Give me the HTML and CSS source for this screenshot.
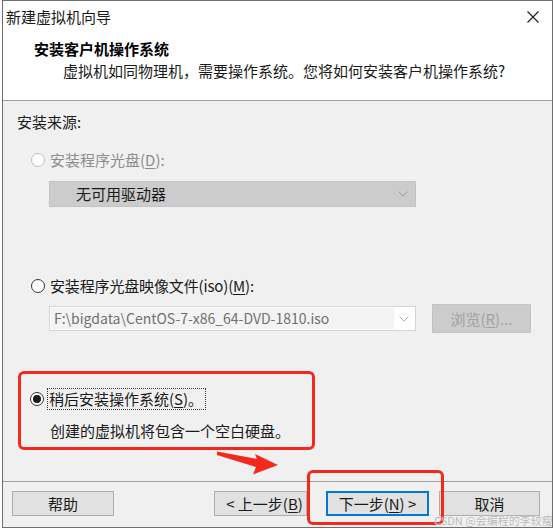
FILE: index.html
```html
<!DOCTYPE html>
<html lang="zh">
<head>
<meta charset="utf-8">
<title>新建虚拟机向导</title>
<link rel="stylesheet" href="styles.css">
</head>
<body>
<div class="window">
  <div class="top">
    <div class="titlebar">
      <span class="title">新建虚拟机向导</span>
      <svg class="close" width="12" height="12" viewBox="0 0 12 12"><path d="M0.5 0.5 L11.5 11.5 M11.5 0.5 L0.5 11.5" stroke="#1a1a1a" stroke-width="1.1" fill="none"/></svg>
    </div>
    <div class="header">
      <div class="h-title">安装客户机操作系统</div>
      <div class="h-sub">虚拟机如同物理机，需要操作系统。您将如何安装客户机操作系统?</div>
    </div>
  </div>

  <div class="content">
    <div class="section-label">安装来源:</div>

    <div class="radio-row disabled row1">
      <span class="radio"></span>
      <span class="label">安装程序光盘(<u>D</u>):</span>
    </div>
    <div class="select disabled-select">
      <span class="select-text">无可用驱动器</span>
      <svg class="chev" width="10" height="6" viewBox="0 0 10 6"><path d="M0.5 0.5 L5 5 L9.5 0.5" stroke="#9a9a9a" fill="none"/></svg>
    </div>

    <div class="radio-row row2">
      <span class="radio"></span>
      <span class="label">安装程序光盘映像文件(iso)(<u>M</u>):</span>
    </div>
    <div class="combo-row">
      <div class="combo">
        <span class="combo-text">F:\bigdata\CentOS-7-x86_64-DVD-1810.iso</span>
        <svg class="chev" width="10" height="6" viewBox="0 0 10 6"><path d="M0.5 0.5 L5 5 L9.5 0.5" stroke="#b0b0b0" fill="none"/></svg>
      </div>
      <div class="browse">浏览(<u>R</u>)...</div>
    </div>

    <div class="highlight">
      <div class="radio-row row3">
        <span class="radio checked"></span>
        <span class="label focus">稍后安装操作系统(<u>S</u>)。</span>
      </div>
      <div class="desc">创建的虚拟机将包含一个空白硬盘。</div>
    </div>
  </div>

  <div class="footer">
    <div class="btn btn-help">帮助</div>
    <div class="btn btn-back">&lt; 上一步(<u>B</u>)</div>
    <div class="btn btn-next">下一步(<u>N</u>) &gt;</div>
    <div class="btn btn-cancel">取消</div>
  </div>

  <div class="mark-box"></div>
  <svg class="arrow" width="66" height="28" viewBox="215 448 66 28">
    <polygon points="217,451.5 257,459 255,454 278,465 253,474.5 256,467 217,455" fill="#f5281e"/>
  </svg>
  <div class="watermark">CSDN @会编程的李较瘦</div>
</div>
</body>
</html>
```

FILE: styles.css
```css
* { box-sizing: border-box; }
html, body {
  margin: 0;
  padding: 0;
  background: #ffffff;
}
body {
  font-family: "Noto Sans CJK SC", "Noto Sans", sans-serif;
  font-size: 15px;
  color: #1a1a1a;
}
u { text-decoration: underline; text-underline-offset: 2px; }

.window {
  position: relative;
  margin-left: 2px;
  width: 551px;
  height: 528px;
  border: 1px solid #6f6f6f;
  background: #f0f0f0;
  display: flex;
  flex-direction: column;
  overflow: hidden;
}

.top { background: #ffffff; }

.titlebar {
  height: 31px;
  display: flex;
  align-items: center;
  justify-content: space-between;
  padding: 0 13px 0 3px;
}
.title { line-height: 20px; color: #1a1a1a; }

.header {
  height: 69px;
  padding-top: 7px;
  border-bottom: 1px solid #a0a0a0;
}
.h-title {
  padding-left: 31px;
  font-weight: 700;
  line-height: 20px;
  color: #000;
}
.h-sub {
  padding-left: 60px;
  margin-top: 2px;
  line-height: 20px;
  color: #1a1a1a;
}

.content {
  height: 380px;
  padding: 11px 0 0 14px;
  display: flex;
  flex-direction: column;
  align-items: flex-start;
}
.section-label { line-height: 20px; }

.radio-row {
  display: flex;
  align-items: center;
  height: 20px;
  margin-left: 14px;
}
.radio {
  width: 14px;
  height: 14px;
  border: 1px solid #333;
  border-radius: 50%;
  background: #fff;
  margin-right: 5px;
  display: flex;
  align-items: center;
  justify-content: center;
}
.radio.checked::after {
  content: "";
  width: 8px;
  height: 8px;
  border-radius: 50%;
  background: #1a1a1a;
}
.label { line-height: 20px; }
.row2 .label { letter-spacing: -0.15px; }
.disabled .radio { border-color: #c0c0c0; }
.disabled .label { color: #8d8d8d; }

.row1 { margin-top: 18px; }
.select {
  margin: 11px 0 0 32px;
  width: 367px;
  height: 26px;
  display: flex;
  align-items: center;
  justify-content: space-between;
  padding: 0 7px 0 26px;
}
.disabled-select {
  background: #cccccc;
  border: 1px solid #c3c3c3;
}
.select-text { color: #1a1a1a; line-height: 20px; }

.row2 { margin-top: 69px; }
.combo-row {
  margin: 8px 0 0 32px;
  display: flex;
  align-items: center;
  gap: 16px;
}
.combo {
  width: 367px;
  height: 25px;
  background: #ffffff;
  border: 1px solid #d4d4d4;
  display: flex;
  align-items: center;
  justify-content: space-between;
  padding: 1px 6px 1px 1px;
}
.combo-text {
  height: 100%;
  width: 343px;
  background: #f3f3f3;
  color: #707070;
  font-size: 14px;
  line-height: 21px;
  padding-left: 3px;
  white-space: nowrap;
  overflow: hidden;
}
.browse {
  width: 99px;
  height: 29px;
  background: #cccccc;
  border: 1px solid #c3c3c3;
  color: #a2a2a2;
  display: flex;
  align-items: center;
  justify-content: center;
}

.highlight {
  margin: 38px 0 0 1px;
  width: 297px;
  height: 79px;
  border: 3px solid #f5281e;
  border-radius: 6px;
  padding: 15px 0 0 0;
}
.highlight .radio-row { margin-left: 9px; }
.focus {
  outline: 1px dotted #333;
  outline-offset: 0;
  padding: 0 2px 0 1px;
  margin-left: -1px;
}
.desc {
  margin: 12px 0 0 29px;
  line-height: 20px;
}

.footer {
  flex: 1;
  border-top: 1px solid #a0a0a0;
  display: flex;
  align-items: flex-start;
  padding: 9px 0 0 9px;
}
.btn {
  height: 25px;
  background: #e1e1e1;
  border: 1px solid #adadad;
  display: flex;
  align-items: center;
  justify-content: center;
  color: #1a1a1a;
  line-height: 18px;
}
.btn-help { width: 102px; }
.btn-back { width: 93px; margin-left: 100px; padding-left: 8px; }
.btn-next {
  width: 103px;
  margin-left: 19px;
  border-color: #0078d7;
  box-shadow: inset 0 0 0 1px #0078d7;
}
.btn-cancel { width: 101px; margin-left: 10px; }

.mark-box {
  position: absolute;
  left: 304px;
  top: 469px;
  width: 137px;
  height: 55px;
  border: 3px solid #f5281e;
  border-radius: 6px;
}
.arrow {
  position: absolute;
  left: 212px;
  top: 447px;
}
.watermark {
  position: absolute;
  left: 431px;
  top: 513px;
  font-size: 11px;
  line-height: 12px;
  color: rgba(160,160,160,0.75);
  text-shadow: 0 0 1px #fff;
  white-space: nowrap;
}
```
